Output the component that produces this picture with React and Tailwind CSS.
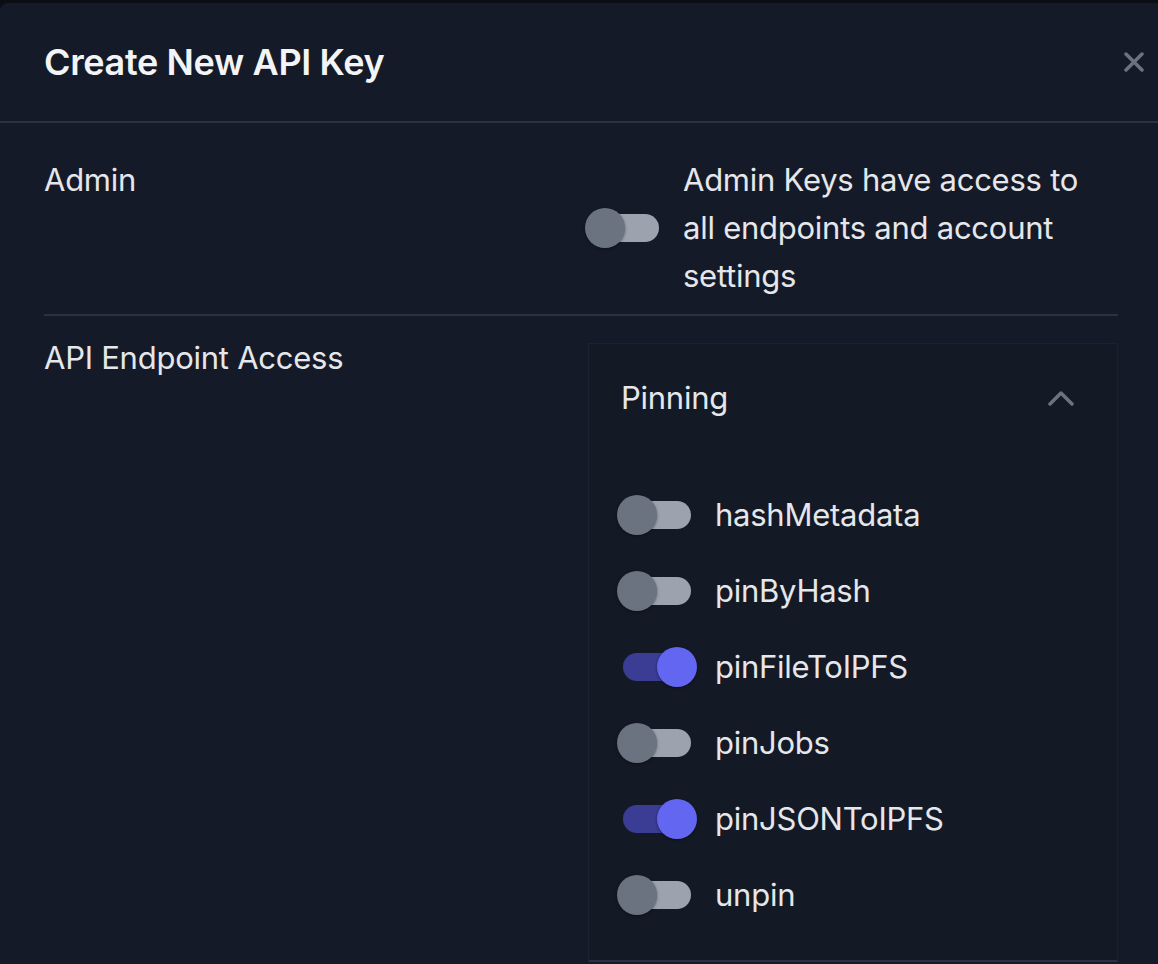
import React from "react";

function Switch({ on }) {
  return (
    <div className="relative h-[40px] w-[80px] shrink-0">
      <div
        className={
          "absolute left-[6px] right-[6px] top-[6px] h-[28px] rounded-full " +
          (on ? "bg-indigo-500/50" : "bg-[#9ca3af]")
        }
      />
      <div
        className={
          "absolute top-0 h-[40px] w-[40px] rounded-full shadow-[0_1px_3px_rgba(0,0,0,0.4)] " +
          (on ? "left-[40px] bg-[#6366f1]" : "left-0 bg-[#6b7280]")
        }
      />
    </div>
  );
}

const endpoints = [
  { name: "hashMetadata", on: false },
  { name: "pinByHash", on: false },
  { name: "pinFileToIPFS", on: true },
  { name: "pinJobs", on: false },
  { name: "pinJSONToIPFS", on: true },
  { name: "unpin", on: false },
];

export default function App() {
  return (
    <div
      className="h-[964px] w-[1158px] overflow-hidden bg-[#0b0e14] pt-[3px] text-[#e5e7eb]"
      style={{ fontFamily: "Inter, 'Noto Sans', sans-serif" }}
    >
      <div className="h-full rounded-tl-lg bg-[#151a28]">
        {/* Header */}
        <div className="flex h-[120px] items-center justify-between border-b-2 border-[#2b3140] pl-[44px] pr-[14px]">
          <h1 className="text-[36px] font-semibold leading-[44px] tracking-[-0.35px] text-[#f3f4f6]">
            Create New API Key
          </h1>
          <button className="flex h-[20px] w-[20px] items-center justify-center">
            <svg width="20" height="20" viewBox="0 0 20 20" fill="none">
              <path
                d="M2 2L18 18M18 2L2 18"
                stroke="#6b7280"
                strokeWidth="3.5"
                strokeLinecap="round"
              />
            </svg>
          </button>
        </div>

        {/* Body */}
        <div className="pl-[44px] pr-[40px] text-[31px] leading-[48px] tracking-[-0.25px]">
          {/* Admin row */}
          <div className="grid grid-cols-[541px_1fr] border-b-2 border-[#2b3140] pb-[14px] pt-[33px]">
            <div>Admin</div>
            <div className="flex items-center gap-[18px]">
              <Switch on={false} />
              <p className="w-[420px]">
                Admin Keys have access to all endpoints and account settings
              </p>
            </div>
          </div>

          {/* API Endpoint Access row */}
          <div className="grid grid-cols-[541px_1fr]">
            <div className="pt-[18px]">API Endpoint Access</div>
            <div className="ml-[3px] mt-[27px] border-x border-t border-[#1b2130] border-b-2 border-b-[#2b3140] bg-[#141926] pb-[41px] pt-[30px]">
              <div className="flex items-center justify-between pl-[32px] pr-[43px]">
                <span>Pinning</span>
                <svg width="26" height="16" viewBox="0 0 26 16" fill="none">
                  <polyline
                    points="2,14 13,3 24,14"
                    stroke="#6b7280"
                    strokeWidth="3.5"
                    strokeLinecap="round"
                    strokeLinejoin="round"
                  />
                </svg>
              </div>
              <div className="mt-[69px] flex flex-col gap-[28px] pl-[28px]">
                {endpoints.map((e) => (
                  <div key={e.name} className="flex h-[48px] items-center gap-[18px]">
                    <Switch on={e.on} />
                    <span>{e.name}</span>
                  </div>
                ))}
              </div>
            </div>
          </div>
        </div>
      </div>
    </div>
  );
}
